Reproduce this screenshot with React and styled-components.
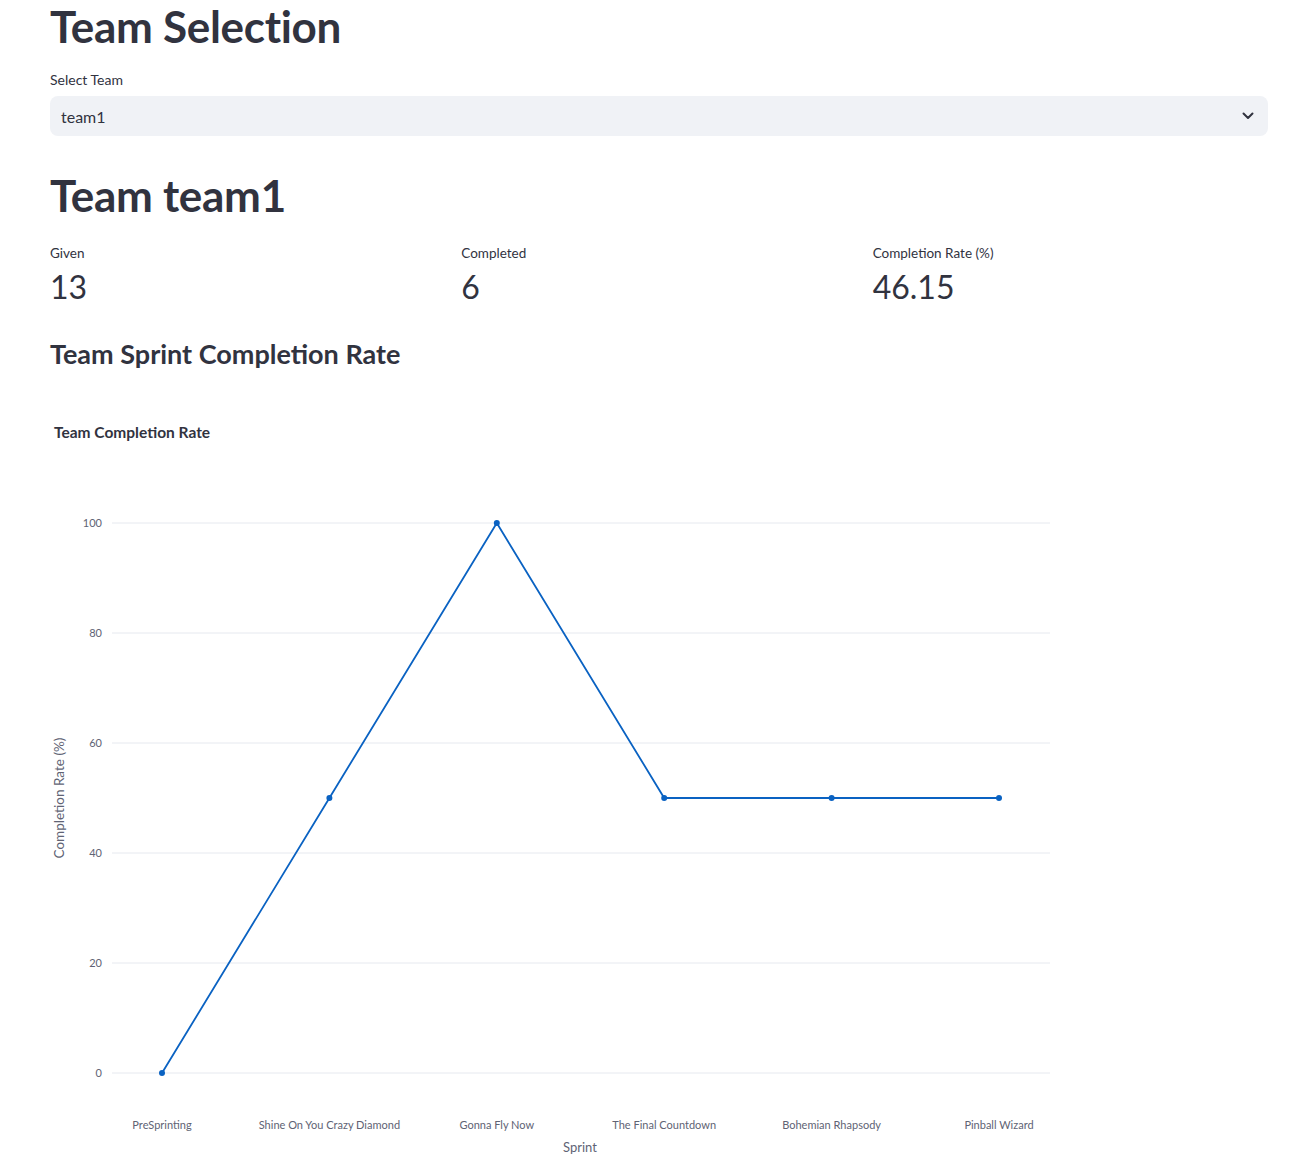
import React from "react";
import styled, { createGlobalStyle } from "styled-components";

const GlobalStyle = createGlobalStyle`
  html, body { margin: 0; padding: 0; background: #ffffff; }
  body { font-family: "Lato", "Noto Sans", sans-serif; color: #31333f; }
`;

const Page = styled.div`
  padding: 0 30px 0 50px;
  display: flex;
  flex-direction: column;
`;

const Title = styled.h1`
  margin: ${(p) => p.$mt || 0}px 0 0 0;
  font-size: 44px;
  line-height: 52px;
  font-weight: 700;
  color: #31333f;
  letter-spacing: -0.3px;
`;

const Field = styled.div`
  margin-top: 20px;
  display: flex;
  flex-direction: column;
  gap: 8px;
`;

const Label = styled.label`
  font-size: 14px;
  line-height: 16px;
  color: #31333f;
`;

const SelectBox = styled.div`
  height: 40px;
  background: #f0f2f6;
  border-radius: 8px;
  display: flex;
  align-items: center;
  justify-content: space-between;
  padding: 0 14px 0 11px;
  box-sizing: border-box;
  font-size: 16px;
  color: #31333f;
`;

const MetricsRow = styled.div`
  margin-top: 22px;
  display: grid;
  grid-template-columns: repeat(3, 1fr);
  gap: 16px;
`;

const Metric = styled.div`
  display: flex;
  flex-direction: column;
`;

const MetricLabel = styled.div`
  font-size: 13.5px;
  line-height: 20px;
  color: #31333f;
`;

const MetricValue = styled.div`
  font-size: 32px;
  line-height: 48px;
  font-weight: 400;
  color: #31333f;
`;

const Subheader = styled.h3`
  margin: 25px 0 0 0;
  font-size: 27px;
  line-height: 36px;
  font-weight: 700;
  color: #31333f;
`;

const Chart = styled.svg`
  display: block;
  margin-top: 38px;
  overflow: visible;
  font-family: "Lato", "Noto Sans", sans-serif;
`;

const sprints = [
  ["PreSprinting", 0],
  ["Shine On You Crazy Diamond", 50],
  ["Gonna Fly Now", 100],
  ["The Final Countdown", 50],
  ["Bohemian Rhapsody", 50],
  ["Pinball Wizard", 50],
];

function CompletionChart() {
  const x0 = 62, x1 = 1000;
  const yFor = (v) => 663 - v * 5.5;
  const xFor = (i) => 112 + i * 167.4;
  const ticks = [0, 20, 40, 60, 80, 100];
  const pts = sprints.map(([, v], i) => `${xFor(i)},${yFor(v)}`).join(" ");
  return (
    <Chart width="1010" height="760" viewBox="0 0 1010 760">
      <text x="4" y="28" fontSize="15.5" fontWeight="700" fill="#31333f">Team Completion Rate</text>
      {ticks.map((t) => (
        <g key={t}>
          <line x1={x0} x2={x1} y1={yFor(t)} y2={yFor(t)} stroke="#e6e9ef" strokeWidth="1" />
          <text x="52" y={yFor(t) + 4} fontSize="11" fill="#606374" textAnchor="end">{t}</text>
        </g>
      ))}
      <polyline points={pts} fill="none" stroke="#0a62c2" strokeWidth="1.8" />
      {sprints.map(([n, v], i) => (
        <g key={n}>
          <circle cx={xFor(i)} cy={yFor(v)} r="3" fill="#0a62c2" />
          <text x={xFor(i)} y="719" fontSize="11" fill="#606374" textAnchor="middle">{n}</text>
        </g>
      ))}
      <text x="530" y="742" fontSize="13" fill="#606374" textAnchor="middle">Sprint</text>
      <text transform="translate(14,388) rotate(-90)" fontSize="13.5" fill="#606374" textAnchor="middle">Completion Rate (%)</text>
    </Chart>
  );
}

export default function App() {
  return (
    <>
      <GlobalStyle />
      <Page>
        <Title $mt={0}>Team Selection</Title>
        <Field>
          <Label>Select Team</Label>
          <SelectBox>
            <span>team1</span>
            <svg width="12" height="8" viewBox="0 0 12 8">
              <path d="M1.5 1.5 L6 6 L10.5 1.5" fill="none" stroke="#31333f" strokeWidth="2" strokeLinecap="round" strokeLinejoin="round" />
            </svg>
          </SelectBox>
        </Field>
        <Title $mt={33}>Team team1</Title>
        <MetricsRow>
          <Metric><MetricLabel>Given</MetricLabel><MetricValue>13</MetricValue></Metric>
          <Metric><MetricLabel>Completed</MetricLabel><MetricValue>6</MetricValue></Metric>
          <Metric><MetricLabel>Completion Rate (%)</MetricLabel><MetricValue>46.15</MetricValue></Metric>
        </MetricsRow>
        <Subheader>Team Sprint Completion Rate</Subheader>
        <CompletionChart />
      </Page>
    </>
  );
}
